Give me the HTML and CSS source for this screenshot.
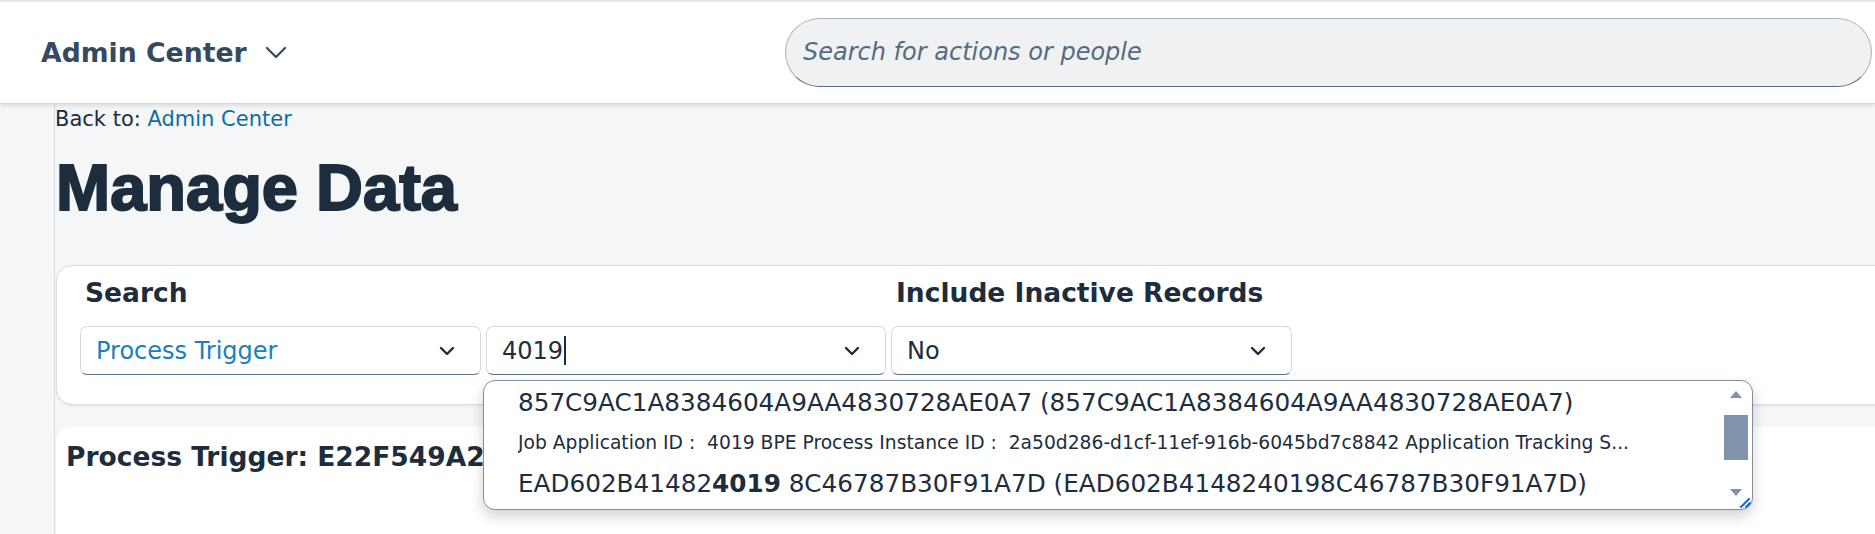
FILE: index.html
```html
<!DOCTYPE html>
<html lang="en">
<head>
<meta charset="utf-8">
<title>Manage Data</title>
<link rel="stylesheet" href="styles.css">
</head>
<body>
<header class="topbar">
  <div class="brand">
    <span>Admin Center</span>
    <svg class="brand-chev" width="22" height="13" viewBox="0 0 22 13"><path d="M2 2 L11 11 L20 2" fill="none" stroke="#354a5f" stroke-width="2.2" stroke-linecap="round" stroke-linejoin="round"/></svg>
  </div>
  <div class="global-search"><span class="placeholder">Search for actions or people</span></div>
</header>
<div class="page">
  <aside class="rail"></aside>
  <main class="main">
    <div class="crumb">Back to: <a class="crumb-link">Admin Center</a></div>
    <h1 class="title">Manage Data</h1>
    <section class="search-card">
      <div class="search-grid">
        <div class="label span2">Search</div>
        <div class="label">Include Inactive Records</div>
        <div class="field">
          <span class="val link">Process Trigger</span>
          <svg class="chev" width="16" height="10" viewBox="0 0 16 10"><path d="M2 2 L8 8 L14 2" fill="none" stroke="#1d2d3e" stroke-width="2.4" stroke-linecap="round" stroke-linejoin="round"/></svg>
        </div>
        <div class="field">
          <span class="val">4019<span class="caret"></span></span>
          <svg class="chev" width="16" height="10" viewBox="0 0 16 10"><path d="M2 2 L8 8 L14 2" fill="none" stroke="#1d2d3e" stroke-width="2.4" stroke-linecap="round" stroke-linejoin="round"/></svg>
          <div class="popover">
            <div class="options">
              <div class="opt">857C9AC1A8384604A9AA4830728AE0A7 (857C9AC1A8384604A9AA4830728AE0A7)</div>
              <div class="opt opt--meta">Job Application ID :  4019 BPE Process Instance ID :  2a50d286-d1cf-11ef-916b-6045bd7c8842 Application Tracking S...</div>
              <div class="opt opt--last">EAD602B41482<b class="hit">4019</b> 8C46787B30F91A7D (EAD602B4148240198C46787B30F91A7D)</div>
            </div>
            <svg class="scroll" width="30" height="128" viewBox="0 0 30 128">
              <path d="M8 17 L20 17 L14 10 Z" fill="#7f93aa"/>
              <rect x="2" y="34" width="24" height="45" fill="#7f93aa"/>
              <path d="M8 108 L20 108 L14 115 Z" fill="#7f93aa"/>
              <path d="M19 126 L27 118 M24 126 L28 122" stroke="#1565d8" stroke-width="2" stroke-linecap="round"/>
            </svg>
          </div>
        </div>
        <div class="field">
          <span class="val">No</span>
          <svg class="chev" width="16" height="10" viewBox="0 0 16 10"><path d="M2 2 L8 8 L14 2" fill="none" stroke="#1d2d3e" stroke-width="2.4" stroke-linecap="round" stroke-linejoin="round"/></svg>
        </div>
      </div>
    </section>
    <section class="result-card">
      <h2 class="result-title">Process Trigger: E22F549A27F14D8C9B0A3E5F6D7C8B9A</h2>
    </section>
  </main>
</div>
</body>
</html>
```

FILE: styles.css
```css
html, body {
  margin: 0;
  padding: 0;
  background: #f5f6f7;
  overflow: hidden;
  font-family: "DejaVu Sans", "Liberation Sans", sans-serif;
  color: #1d2d3e;
}

.topbar {
  position: relative;
  z-index: 2;
  height: 101px;
  border-top: 2px solid #e4e6e9;
  border-bottom: 1px solid #d3d7db;
  background: #fff;
  display: grid;
  grid-template-columns: 785px 1087px;
  align-items: center;
  box-shadow: 0 2px 4px rgba(0, 0, 0, 0.10);
}

.brand {
  padding-left: 41px;
  display: flex;
  align-items: center;
  gap: 18px;
  font-weight: bold;
  font-size: 26.7px;
  color: #354a5f;
}

.global-search {
  box-sizing: border-box;
  height: 69px;
  border: 1px solid #aab5c0;
  border-bottom-color: #556b82;
  border-radius: 35px;
  background: #eff1f2;
  display: flex;
  align-items: center;
  padding-left: 17px;
  margin-top: -1px;
}

.placeholder {
  font-style: italic;
  font-size: 24px;
  color: #556b82;
}

.page {
  display: flex;
  height: 430px;
}

.rail {
  width: 54px;
  flex: none;
  border-right: 1px solid #d9dcdf;
  background: #f5f6f7;
}

.main {
  flex: 0 0 1840px;
}

.crumb {
  font-size: 21px;
  line-height: 24px;
  padding-top: 3px;
  color: #1d2d3e;
}

.crumb-link {
  color: #0d6ea3;
}

.title {
  margin: 21px 0 0 1px;
  font-family: "Liberation Sans", sans-serif;
  font-weight: bold;
  font-size: 65px;
  line-height: 72px;
  color: #1d2d3e;
  -webkit-text-stroke: 2px #1d2d3e;
}

.search-card {
  margin: 41px 0 0 1px;
  background: #fff;
  border: 1px solid #d9dde1;
  border-radius: 16px;
  padding: 11px 0 29px 23px;
  box-shadow: 0 1px 2px rgba(0, 0, 0, 0.08);
}

.search-grid {
  display: grid;
  grid-template-columns: 401px 400px 401px;
  column-gap: 5px;
  row-gap: 17px;
}

.label {
  font-weight: bold;
  font-size: 26.5px;
  line-height: 32px;
  padding-left: 5px;
}

.span2 {
  grid-column: span 2;
}

.field {
  position: relative;
  height: 47px;
  border: 1px solid #d5dadf;
  border-bottom-color: #5b738b;
  border-radius: 7px;
  background: #fff;
  display: flex;
  align-items: center;
  justify-content: space-between;
  padding: 0 25px 0 15px;
  font-size: 24px;
}

.val {
  display: flex;
  align-items: center;
  color: #1d2d3e;
}

.link {
  color: #1a80bd;
}

.caret {
  display: inline-block;
  width: 2px;
  height: 29px;
  margin-left: 1px;
  background: #1d2d3e;
}

.chev {
  display: block;
}

.popover {
  position: absolute;
  z-index: 5;
  top: 53px;
  left: -4px;
  width: 1268px;
  border: 1px solid #7f8fa0;
  border-radius: 12px;
  background: #fff;
  box-shadow: 0 6px 14px rgba(0, 0, 0, 0.18);
  display: flex;
}

.options {
  flex: 1;
  min-width: 0;
  padding: 0 0 2px 34px;
}

.opt {
  height: 44px;
  line-height: 44px;
  font-size: 24.7px;
  white-space: nowrap;
  color: #1d2d3e;
}

.opt--meta {
  height: 36px;
  line-height: 36px;
  font-size: 18.7px;
  white-space: pre;
  overflow: hidden;
  padding-right: 42px;
}

.opt--last {
  height: 46px;
  line-height: 46px;
}

.hit {
  font-weight: bold;
}

.scroll {
  flex: none;
  display: block;
}

.result-card {
  margin: 21px 0 0 1px;
  background: #fff;
  border-radius: 16px 0 0 0;
  padding: 15px 10px;
  height: 200px;
  box-shadow: 0 0 2px rgba(0, 0, 0, 0.06);
}

.result-title {
  margin: 0;
  font-weight: bold;
  font-size: 26.5px;
  line-height: 32px;
  white-space: nowrap;
}
```
